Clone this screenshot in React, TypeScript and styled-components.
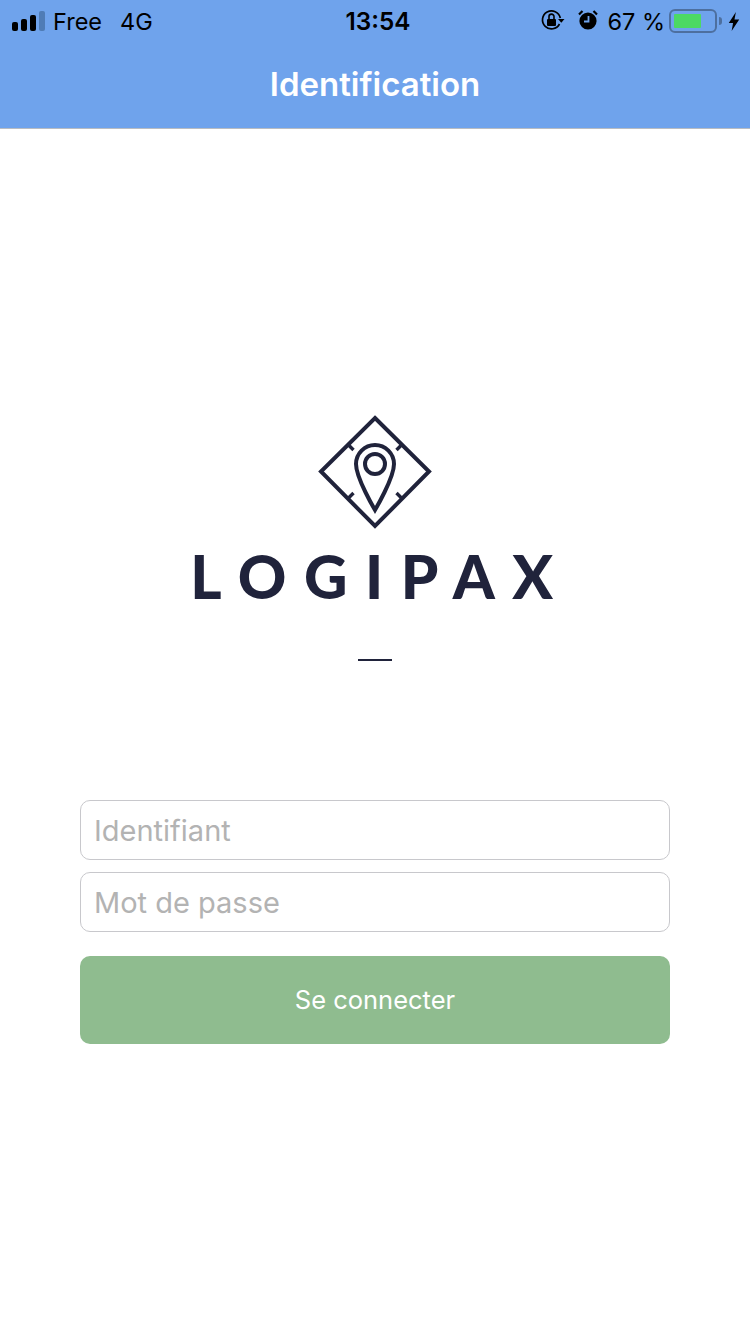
import styled, { createGlobalStyle } from "styled-components";

const GlobalStyle = createGlobalStyle`
  html, body {
    margin: 0;
    padding: 0;
    background: #ffffff;
    font-family: Inter, "Noto Sans", sans-serif;
  }
  * {
    box-sizing: border-box;
  }
`;

const App = () => {
  return (
    <PageStyle>
      <GlobalStyle />
      <HeaderStyle>
        <StatusBarStyle>
          <StatusLeftStyle>
            <SignalBarsStyle>
              <SignalBarStyle $height={9} />
              <SignalBarStyle $height={12} />
              <SignalBarStyle $height={16} />
              <SignalBarStyle $height={20} $dim />
            </SignalBarsStyle>
            <span>Free</span>
            <NetworkStyle>4G</NetworkStyle>
          </StatusLeftStyle>
          <ClockStyle>13:54</ClockStyle>
          <StatusRightStyle>
            <LockIconStyle width="24" height="24" viewBox="0 0 24 24" fill="none">
              <path d="M18.5 16A9 9 0 1 1 19.3 10" stroke="#000" strokeWidth="1.7" />
              <path d="M17 11h6.5l-3.2 3.8z" fill="#000" />
              <rect x="6" y="11" width="9" height="7" rx="1" fill="#000" />
              <path d="M8 11V8.6a2.5 2.5 0 0 1 5 0V11" stroke="#000" strokeWidth="1.6" />
            </LockIconStyle>
            <AlarmIconStyle width="24" height="24" viewBox="0 0 24 24" fill="none">
              <circle cx="12" cy="13" r="8.6" fill="#000" />
              <path d="M12.5 8v5.5H8" stroke="#6fa3ec" strokeWidth="1.8" />
              <path d="M3 6.5 6.5 3M21 6.5 17.5 3" stroke="#000" strokeWidth="2.2" />
            </AlarmIconStyle>
            <BatteryTextStyle>67 %</BatteryTextStyle>
            <BatteryStyle>
              <BatteryFillStyle style={{ width: "72%" }} />
            </BatteryStyle>
            <BatteryCapStyle />
            <BoltIconStyle width="12" height="19" viewBox="0 0 12 20">
              <path d="M8 0 .5 11.5h4.5L3.5 20 11.5 8H6.5z" fill="#000" />
            </BoltIconStyle>
          </StatusRightStyle>
        </StatusBarStyle>
        <TitleBarStyle>Identification</TitleBarStyle>
      </HeaderStyle>
      <MainStyle>
        <svg width="114" height="114" viewBox="0 0 114 114" fill="none">
          <g stroke="#20233b" strokeWidth="4">
            <path d="M57 3 111 56.5 57 111 3 56.5Z" />
            <path d="M57 95C57 95 38 63 38 49A19 19 0 0 1 76 49C76 63 57 95 57 95Z" />
            <circle cx="57" cy="49" r="10" />
            <path d="M29.5 29 35.5 35M84.5 29 78.5 35M29.5 84 35.5 78M84.5 84 78.5 78" strokeWidth="3.4" />
          </g>
        </svg>
        <LogoTextStyle>LOGIPAX</LogoTextStyle>
        <LogoDashStyle />
        <FormStyle>
          <InputStyle placeholder="Identifiant" />
          <InputStyle placeholder="Mot de passe" />
          <SubmitButtonStyle>Se connecter</SubmitButtonStyle>
        </FormStyle>
      </MainStyle>
    </PageStyle>
  );
};

export default App;

const PageStyle = styled.div`
  width: 750px;
  height: 1334px;
  display: flex;
  flex-direction: column;
  overflow: hidden;
  background: #ffffff;
`;

const HeaderStyle = styled.header`
  height: 129px;
  background: #6fa3ec;
  border-bottom: 1px solid #b8bcc2;
`;

const StatusBarStyle = styled.div`
  height: 40px;
  display: grid;
  grid-template-columns: 1fr auto 1fr;
  align-items: center;
  padding: 2px 10px 0 12px;
  font-size: 23.5px;
  color: #000000;
`;

const StatusLeftStyle = styled.div`
  display: flex;
  align-items: center;
  gap: 8px;
`;

const SignalBarsStyle = styled.div`
  display: flex;
  align-items: flex-end;
  gap: 3px;
  height: 20px;
`;

const SignalBarStyle = styled.div<{ $height: number; $dim?: boolean }>`
  width: 6px;
  height: ${({ $height }) => $height}px;
  border-radius: 2px;
  background: ${({ $dim }) => ($dim ? "#4f7cb6" : "#000000")};
`;

const NetworkStyle = styled.span`
  margin-left: 10px;
`;

const ClockStyle = styled.div`
  padding-left: 4px;
  font-size: 24.3px;
  font-weight: 600;
`;

const StatusRightStyle = styled.div`
  display: flex;
  align-items: center;
  justify-content: flex-end;
`;

const LockIconStyle = styled.svg`
  margin-bottom: 3px;
`;

const AlarmIconStyle = styled.svg`
  margin: 0 0 3px 11px;
`;

const BatteryTextStyle = styled.span`
  margin-left: 7px;
`;

const BatteryStyle = styled.div`
  width: 48px;
  height: 24px;
  margin-left: 4px;
  padding: 3px;
  border: 2px solid #4d6f9f;
  border-radius: 6px;
`;

const BatteryFillStyle = styled.div`
  height: 100%;
  background: #4cd964;
  border-radius: 1px;
`;

const BatteryCapStyle = styled.div`
  width: 3px;
  height: 8px;
  margin-left: 2px;
  background: #4d6f9f;
  border-radius: 0 3px 3px 0;
`;

const BoltIconStyle = styled.svg`
  margin-left: 6px;
`;

const TitleBarStyle = styled.div`
  height: 88px;
  display: flex;
  align-items: center;
  justify-content: center;
  font-size: 33px;
  font-weight: 600;
  color: #ffffff;
`;

const MainStyle = styled.main`
  display: flex;
  flex-direction: column;
  align-items: center;
  padding: 286px 80px 0;
`;

const LogoTextStyle = styled.div`
  margin-top: 11px;
  padding-left: 11px;
  font-family: Lato, "Noto Sans", sans-serif;
  font-size: 60px;
  line-height: 73px;
  font-weight: 900;
  letter-spacing: 17.5px;
  color: #20233b;
`;

const LogoDashStyle = styled.div`
  width: 34px;
  height: 2px;
  margin-top: 46px;
  background: #20233b;
`;

const FormStyle = styled.form`
  width: 100%;
  margin-top: 139px;
  display: flex;
  flex-direction: column;
  gap: 12px;
`;

const InputStyle = styled.input`
  height: 60px;
  padding: 0 13px;
  border: 1px solid #c8c8cc;
  border-radius: 10px;
  outline: none;
  font-family: inherit;
  font-size: 29px;
  color: #333333;

  &::placeholder {
    color: #b3b3b3;
    opacity: 1;
  }
`;

const SubmitButtonStyle = styled.button`
  height: 88px;
  margin-top: 12px;
  padding-bottom: 3px;
  border: none;
  border-radius: 10px;
  background: #8fbc8f;
  font-family: inherit;
  font-size: 25.5px;
  color: #ffffff;
`;
